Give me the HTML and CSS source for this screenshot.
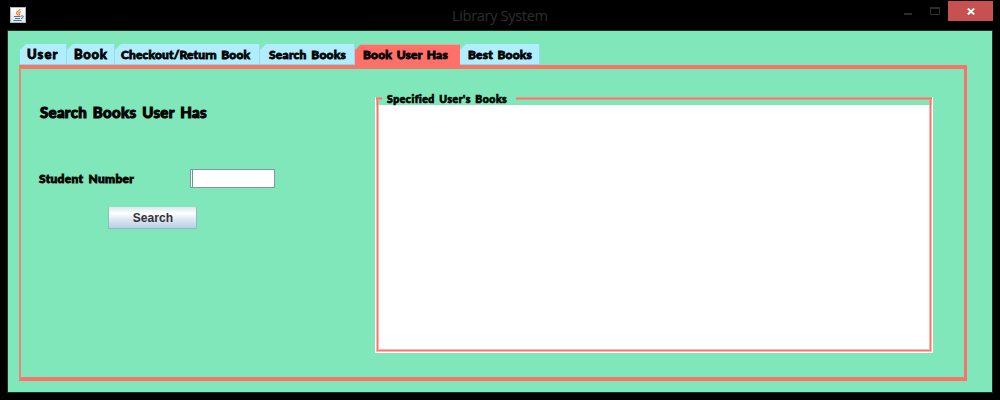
FILE: index.html
```html
<!DOCTYPE html>
<html lang="en">
<head>
<meta charset="utf-8">
<title>Library System</title>
<link rel="stylesheet" href="styles.css">
</head>
<body>
<header class="titlebar">
  <svg class="java" viewBox="0 0 16 16">
    <defs><linearGradient id="g" x2="0" y2="1"><stop stop-color="#fff"/><stop offset="1" stop-color="#dde3e8"/></linearGradient></defs>
    <rect x=".5" y=".5" width="15" height="15" fill="url(#g)" stroke="#a9b9c6"/>
    <path d="M10 2.200C9.500 4 6 4.500 6.500 6.300C6.800 7.200 8 7.500 8 8.500M10.800 4.800C8.500 5.500 8.500 6.300 9.200 6.800C9.800 7.400 9.500 8 9 8.500" fill="none" stroke="#ec7a22" stroke-width="1.200"/>
    <path d="M4 9.500H10.500M5 11.500H10M3.500 13.500H11.500M11 9C14.500 8.300 13.800 11 11 11.500" fill="none" stroke="#48769b"/>
  </svg>
  <h1 class="caption">Library System</h1>
  <div class="controls">
    <svg class="glyphs" viewBox="0 0 45 20"><path d="M1 14h8" stroke="#2e2e2e" stroke-width="2"/><path d="M27.500 8v6.500h9V8" fill="none" stroke="#2e2e2e"/><path d="M27 8h10" stroke="#2e2e2e" stroke-width="2"/></svg>
    <div class="close"><svg class="cross" viewBox="0 0 8 7"><path d="M.8.500L7.200 6.500M7.200.500L.8 6.500" stroke="#fff" stroke-width="1.900"/></svg></div>
  </div>
</header>
<main class="window">
  <nav class="tabs">
    <div class="tab t-user"><span>User</span></div>
    <div class="tab t-book"><span>Book</span></div>
    <div class="tab t-checkout"><span>Checkout/Return Book</span></div>
    <div class="tab t-search"><span>Search Books</span></div>
    <div class="tab t-has active"><span>Book User Has</span></div>
    <div class="tab t-best"><span>Best Books</span></div>
  </nav>
  <section class="panel">
    <form class="form">
      <h2 class="heading">Search Books User Has</h2>
      <div class="row">
        <label class="label" for="num">Student Number</label>
        <input class="field" id="num" type="text">
      </div>
      <button class="button" type="button">Search</button>
    </form>
    <section class="results">
      <div class="legend"><i class="stub"></i><h3 class="legend-text">Specified User's Books</h3><i class="rule"></i></div>
      <div class="list"></div>
    </section>
  </section>
</main>
</body>
</html>
```
FILE: styles.css
```css
* { box-sizing: border-box; }
body { margin: 0; width: 1000px; height: 400px; overflow: hidden; background: #000; color: #000; font-family: Lato, sans-serif; }
h1, h2, h3 { margin: 0; }
.titlebar { height: 30px; display: flex; align-items: flex-start; }
.java { width: 16px; height: 16px; margin: 7px 0 0 10px; }
.caption { margin: 5px 0 0 426px; width: 100px; font: 14.600px/20px "Open Sans", sans-serif; color: #2e2e2e; white-space: nowrap; letter-spacing: -.35px; }
.controls { display: flex; margin-left: auto; padding: 1px 7px 0 0; }
.glyphs { width: 45px; height: 20px; margin-top: -1px; }
.close { width: 45px; height: 20px; background: #c75050; display: flex; align-items: center; justify-content: center; }
.cross { width: 8px; height: 7px; margin-top: 1px; }
.window { margin: 0 7px; height: 363px; border: 1px solid #20302b; background: #80e7bb; padding: 13px 25px 0 11px; }
.tabs { display: flex; height: 21px; padding-left: 1px; }
.tab { background: #b0eeff; border-right: 1px solid #9bd9e6; border-bottom: 1px solid #94d4dd; clip-path: polygon(6px 0, 100% 0, 100% 100%, 0 100%, 0 6px); font-weight: 900; font-size: 12px; line-height: 21px; white-space: nowrap; -webkit-text-stroke: .8px #000; }
.active { background: #ff7069; border-color: #ff7069; border-top: 1px solid #e6a79f; line-height: 19px; }
.t-user { width: 47px; padding-left: 7px; font-size: 13px; letter-spacing: 1.100px; }
.t-book { width: 48px; padding-left: 7px; font-size: 13px; letter-spacing: .7px; }
.t-checkout { width: 145px; padding-left: 6px; letter-spacing: .15px; word-spacing: 1.500px; }
.t-search { width: 95px; padding-left: 9px; letter-spacing: .25px; word-spacing: 1.500px; }
.t-has { width: 105px; padding-left: 8px; letter-spacing: .2px; word-spacing: 1.500px; }
.t-best { width: 80px; padding-left: 8px; letter-spacing: .2px; word-spacing: 1.500px; }
.panel { display: flex; height: 316px; width: 948px; border: solid; border-width: 4px 3px 4px 2px; border-color: #f8746b #f8746b #f8746b #e58a78; }
.form { width: 354px; padding: 32px 0 0 19px; }
.heading { font-size: 15px; line-height: 22px; font-weight: 900; letter-spacing: .3px; word-spacing: 2px; -webkit-text-stroke: 1px #000; white-space: nowrap; }
.row { display: flex; margin: 46px 0 0 -1px; height: 19px; }
.label { width: 151px; font-size: 12px; line-height: 19px; font-weight: 900; letter-spacing: .3px; word-spacing: 2px; -webkit-text-stroke: .8px #000; white-space: nowrap; }
.field { width: 85px; height: 19px; padding: 0 3px; border: 1px solid #7f9a9c; background: #fff; box-shadow: inset 1px 0 #fff, inset 2px 0 #51a887; outline: 0; }
.button { display: block; width: 89px; height: 22px; margin: 19px 0 0 68px; padding: 0; border: 1px solid #94b9c4; border-top: 0; background: linear-gradient(#dce6f0, #fff 30%, #e1eaf3 55%, #b9cfe4); font: bold 12px/20px "Liberation Sans", sans-serif; letter-spacing: .1px; text-indent: 1px; color: #333; }
.results { width: 558px; height: 256px; margin-top: 28px; border-left: 1px solid #fff; border-right: 1px solid #fff; }
.legend { display: flex; height: 8px; box-shadow: inset 1px 0 #f3a494, inset 2px 0 #ff7069, inset 3px 0 #eca08f, inset -1px 0 #eca08f, inset -2px 0 #ff7069, inset -3px 0 #eca08f; }
.stub { width: 6px; height: 3px; border: solid #dda08b; border-width: 1px 0; background: #ff7069; }
.legend-text { width: 134px; padding-left: 5px; font-size: 10.500px; line-height: 14px; margin-top: -5px; font-weight: 900; letter-spacing: .5px; word-spacing: 1.500px; -webkit-text-stroke: .7px #000; white-space: nowrap; }
.rule { flex: 1; height: 3px; border: solid #dda08b; border-width: 1px 0; background: #ff7069; }
.list { height: 248px; background: #fff; border-bottom: 1px solid #fff; box-shadow: inset 1px 0 #ffb7b4, inset -1px 0 #ffb7b4, inset 0 -1px #ffb7b4, inset 2px 0 #ff7069, inset -2px 0 #ff7069, inset 0 -2px #ff7069, inset 3px 0 #ffb7b4, inset -3px 0 #ffb7b4, inset 0 -3px #ffb7b4; }
```
